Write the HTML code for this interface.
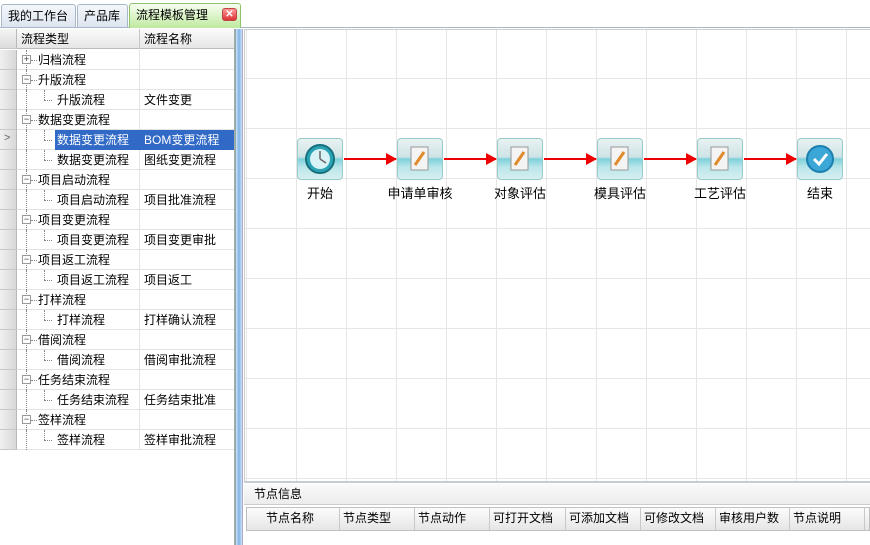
<!DOCTYPE html>
<html><head><meta charset="utf-8"><style>
*{margin:0;padding:0;box-sizing:border-box}
body{width:870px;height:545px;overflow:hidden;background:#fff;font-family:"Liberation Sans","Noto Sans CJK SC",sans-serif;font-size:12px;color:#000;position:relative}
.abs{position:absolute}
.tab{position:absolute;top:4px;height:23px;border:1px solid #a9b8c9;border-bottom:none;border-radius:3px 3px 0 0;background:linear-gradient(#f4f7fb,#dce5ef);line-height:22px;padding-left:6px;font-size:12px}
.row{position:absolute;left:0;width:234px;height:20px;border-bottom:1px solid #e3e3e3}
.rh{position:absolute;left:0;top:0;width:17px;height:20px;background:linear-gradient(90deg,#f0f0f0,#d8d8d8);border-right:1px solid #b8b8b8;border-bottom:1px solid #c8c8c8}
.c1{position:absolute;left:17px;top:0;width:123px;height:20px;border-right:1px solid #e3e3e3;line-height:20px}
.c2{position:absolute;left:140px;top:0;width:94px;height:20px;line-height:20px;padding-left:4px}
.pm{position:absolute;left:5px;top:5px;width:9px;height:9px;border:1px solid #999;background:#fff;font-size:9px;line-height:7px;text-align:center;color:#333}
.node{position:absolute;top:138px;width:46px;height:42px;border:1px solid #9cc;border-radius:4px;background:linear-gradient(#e8f2f2 0%,#cfe3e6 45%,#7fd0da 50%,#b9e6ea 70%,#d7eef0 100%)}
.lbl{position:absolute;top:183px;width:100px;text-align:center;font-size:13px}
.arrow{position:absolute;top:158px;height:2px;background:#e00}
.arrow:after{content:"";position:absolute;right:-1px;top:-5px;border-left:11px solid #e00;border-top:6px solid transparent;border-bottom:6px solid transparent}
.th{position:absolute;top:507px;height:23px;border-right:1px solid #c8c8c8;line-height:23px;padding-left:20px;font-size:12px}
</style></head><body>
<div class="abs" style="left:0;top:0;width:870px;height:28px;background:#fff;border-bottom:1px solid #a9b8c9"></div>
<div class="tab" style="left:1px;width:75px">我的工作台</div>
<div class="tab" style="left:77px;width:51px">产品库</div>
<div class="tab" style="left:129px;width:112px;height:25px;top:3px;background:linear-gradient(#f6fff0,#bfe9a0);border-color:#8bc36b">流程模板管理
<div class="abs" style="left:92px;top:4px;width:15px;height:13px;border-radius:3px;background:linear-gradient(#f99,#d33);border:1px solid #b44;color:#fff;font-size:10px;line-height:11px;text-align:center;font-weight:bold">✕</div></div>

<div class="abs" style="left:0;top:29px;width:235px;height:516px;background:#fff;border-right:1px solid #aaa">
<div class="row" style="top:0;background:linear-gradient(#fafafa,#e6e6e6);border-bottom:1px solid #bbb">
<div class="rh" style="background:linear-gradient(#f4f4f4,#dcdcdc)"></div>
<div class="c1" style="border-right:1px solid #c8c8c8;padding-left:4px">流程类型</div><div class="c2">流程名称</div></div>
</div>
<div id="rows"></div>
<div class="abs" style="left:235px;top:29px;width:8px;height:516px;background:linear-gradient(90deg,#cfe3f7,#7fb2e6,#cfe3f7);border-left:1px solid #8aa;border-right:1px solid #aac"></div>

<div class="abs" style="left:244px;top:29px;width:626px;height:452px;border-left:1px solid #ccc;border-top:1px solid #ccc;
background-image:linear-gradient(90deg,#e6e6e6 1px,transparent 1px),linear-gradient(#e6e6e6 1px,transparent 1px);background-size:50px 50px;background-position:1px 48px"></div>
<div class="abs" style="left:244px;top:481px;width:626px;height:64px;background:#fff;border-top:2px solid #c6ccd4"></div>
<div class="abs" style="left:244px;top:484px;width:626px;height:21px;background:linear-gradient(#fafafa,#ececec);border-bottom:1px solid #ccc;line-height:21px;padding-left:10px">节点信息</div>
<div class="abs" style="left:246px;top:507px;width:624px;height:24px;background:linear-gradient(#fcfcfc,#e6e6e6);border:1px solid #c0c0c0"></div>
<div class="th" style="left:246px;width:94px">节点名称</div>
<div class="th" style="left:340px;width:75px;padding-left:3px">节点类型</div>
<div class="th" style="left:415px;width:75px;padding-left:3px">节点动作</div>
<div class="th" style="left:490px;width:76px;padding-left:3px">可打开文档</div>
<div class="th" style="left:566px;width:75px;padding-left:3px">可添加文档</div>
<div class="th" style="left:641px;width:75px;padding-left:3px">可修改文档</div>
<div class="th" style="left:716px;width:74px;padding-left:3px">审核用户数</div>
<div class="th" style="left:790px;width:75px;padding-left:3px">节点说明</div>

<div id="flow"></div>
<script>
var rows=[["+","归档流程",""],["-","升版流程",""],["c","升版流程","文件变更"],["-","数据变更流程",""],["c","数据变更流程","BOM变更流程"],["c","数据变更流程","图纸变更流程"],["-","项目启动流程",""],["c","项目启动流程","项目批准流程"],["-","项目变更流程",""],["c","项目变更流程","项目变更审批"],["-","项目返工流程",""],["c","项目返工流程","项目返工"],["-","打样流程",""],["c","打样流程","打样确认流程"],["-","借阅流程",""],["c","借阅流程","借阅审批流程"],["-","任务结束流程",""],["c","任务结束流程","任务结束批准"],["-","签样流程",""],["c","签样流程","签样审批流程"]];
var h="";rows.forEach(function(r,i){var t=50+i*20,sel=i==4;
h+='<div class="row" style="top:'+t+'px"><div class="rh">'+(sel?'<span style="position:absolute;left:4px;top:2px;color:#666;font-size:11px">&gt;</span>':'')+'</div><div class="c1">';
h+='<div style="position:absolute;left:9px;top:0;height:20px;border-left:1px dotted #888"></div>';
if(r[0]=="c"){h+='<div style="position:absolute;left:27px;top:0;width:1px;height:10px;border-left:1px dotted #888"></div><div style="position:absolute;left:27px;top:10px;width:8px;border-top:1px dotted #888"></div><div style="position:absolute;left:38px;top:0;height:20px;padding:0 2px;'+(sel?'background:#3169c6;color:#fff;width:86px':'')+'">'+r[1]+'</div>';}
else{h+='<div class="pm">'+(r[0]=="+"?"+":"−")+'</div><div style="position:absolute;left:14px;top:10px;width:6px;border-top:1px dotted #888"></div><div style="position:absolute;left:21px;top:0">'+r[1]+'</div>';}
h+='</div><div class="c2" style="'+(sel?'background:#3169c6;color:#fff':'')+'">'+r[2]+'</div></div>';});
document.getElementById("rows").innerHTML=h;
var names=["开始","申请单审核","对象评估","模具评估","工艺评估","结束"],f="";
names.forEach(function(n,i){var cx=320+i*100;
var ic;if(i==0)ic='<circle cx="22" cy="20" r="14" fill="#2aa3b5" stroke="#17707e" stroke-width="2"/><circle cx="22" cy="20" r="10" fill="#d9f2f5"/><path d="M22 20 L22 12 M22 20 L28 24" stroke="#666" stroke-width="1.5"/>';
else if(i==5)ic='<circle cx="22" cy="20" r="13" fill="#3aa7d6" stroke="#1d7fae" stroke-width="2"/><path d="M16 20 L21 25 L29 15" stroke="#fff" stroke-width="3" fill="none"/>';
else ic='<rect x="13" y="8" width="17" height="23" fill="#f4f4f4" stroke="#999"/><path d="M17 26 L26 13" stroke="#e08a2a" stroke-width="3"/>';
f+='<div class="node" style="left:'+(cx-23)+'px"><svg width="44" height="40">'+ic+'</svg></div><div class="lbl" style="left:'+(cx-50)+'px">'+n+'</div>';
if(i<5)f+='<div class="arrow" style="left:'+(cx+24)+'px;width:52px"></div>';});
document.getElementById("flow").innerHTML=f;
</script>
</body></html>
